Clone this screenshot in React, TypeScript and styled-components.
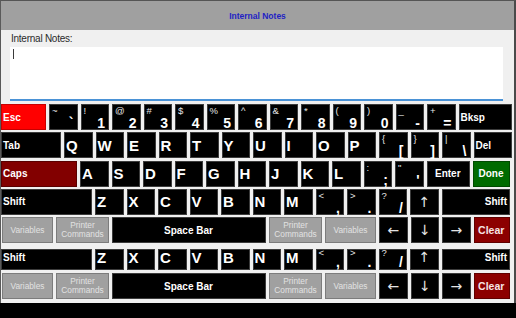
import React from "react";
import styled, { createGlobalStyle, css } from "styled-components";

const GlobalStyle = createGlobalStyle`
  html, body {
    margin: 0;
    padding: 0;
    background: #000;
  }
  #root {
    width: 516px;
    height: 318px;
    overflow: hidden;
    background: #000;
  }
`;

const Window = styled.div`
  box-sizing: border-box;
  width: 516px;
  height: 303px;
  background: #f0f0f0;
  border-top: 1px solid #555;
  border-left: 1px solid #5a5a5a;
  border-right: 2px solid #4a4a4a;
  display: flex;
  flex-direction: column;
  font-family: "Liberation Sans", Arial, sans-serif;
`;

const Header = styled.div`
  height: 29px;
  flex: none;
  background: #a0a0a0;
  display: flex;
  align-items: center;
  justify-content: center;
`;

const Title = styled.div`
  font-size: 8.5px;
  font-weight: bold;
  color: #1f1fc4;
  padding-top: 1px;
`;

const Label = styled.div`
  margin: 3px 0 0 10px;
  font-size: 10px;
  line-height: 12px;
  letter-spacing: -0.25px;
  color: #2a2a2a;
`;

const TextBox = styled.div`
  box-sizing: border-box;
  margin: 1.5px 0 0 8.5px;
  width: 493.5px;
  height: 54px;
  background: #fff;
  border-bottom: 2px solid #4a92d6;
  padding: 2px 0 0 3px;
`;

const Caret = styled.span`
  display: block;
  width: 1px;
  height: 10px;
  background: #3a3a3a;
`;

const Keyboard = styled.div<{ $mt: number; $gap: number }>`
  display: flex;
  flex-direction: column;
  margin-top: ${(p) => p.$mt}px;
  gap: ${(p) => p.$gap}px;
`;

const Row = styled.div<{ $h: number; $ml?: number; $clipped?: boolean }>`
  display: flex;
  gap: 3px;
  height: ${(p) => p.$h}px;
  margin-left: ${(p) => p.$ml ?? 0}px;
  --lift: ${(p) => (p.$clipped ? 5 : 0)}px;
  --shift-lh: ${(p) => (p.$clipped ? 5 : 11)}px;
  --dual-pb: ${(p) => (p.$clipped ? 0 : 1)}px;
`;

type Tone = "black" | "red" | "maroon" | "green" | "clear" | "gray";

const toneStyles: Record<Tone, ReturnType<typeof css>> = {
  black: css`
    background: #000;
    border-color: #3c3c3c;
    color: #fff;
  `,
  red: css`
    background: #ff0000;
    border-color: #c80000;
    color: #fff;
  `,
  maroon: css`
    background: #820000;
    border-color: #5a0000;
    color: #fff;
  `,
  green: css`
    background: #006b00;
    border-color: #004a00;
    color: #fff;
  `,
  clear: css`
    background: #8c0000;
    border-color: #600000;
    color: #f6e4e4;
  `,
  gray: css`
    background: #a0a0a0;
    border-color: #7c7c7c;
    color: #e2e2e2;
  `,
};

const KeyBase = styled.div<{ $w: number; $tone: Tone }>`
  box-sizing: border-box;
  flex: none;
  width: ${(p) => p.$w}px;
  height: 100%;
  border: 1px solid;
  ${(p) => toneStyles[p.$tone]}
  padding-bottom: var(--lift);
`;

const LabelKey = styled(KeyBase)<{ $align: "left" | "center" | "right" }>`
  display: flex;
  align-items: center;
  justify-content: ${(p) =>
    p.$align === "left" ? "flex-start" : p.$align === "right" ? "flex-end" : "center"};
  padding-left: 1px;
  padding-right: 2px;
  font-size: 10px;
  font-weight: bold;
  white-space: nowrap;
`;

const ClearKey = styled(LabelKey)`
  font-size: 10.5px;
`;

const LetterKey = styled(KeyBase)`
  display: flex;
  align-items: center;
  padding-left: 1px;
  font-size: 15px;
  font-weight: bold;
`;

const DualKey = styled(KeyBase)`
  display: flex;
  flex-direction: column;
  justify-content: space-between;
  padding: 0 3px var(--dual-pb) 2px;
`;

const Shifted = styled.span`
  align-self: flex-start;
  font-size: 9.5px;
  line-height: var(--shift-lh);
  color: #e6e6e6;
`;

const Main = styled.span`
  align-self: flex-end;
  font-size: 14px;
  line-height: 14px;
  font-weight: bold;
`;

const ArrowKey = styled(KeyBase)`
  display: flex;
  align-items: center;
  justify-content: center;
  font-family: "DejaVu Sans", sans-serif;
  font-size: 14px;
  color: #e4e4e4;
`;

const GrayKey = styled(KeyBase)`
  display: flex;
  flex-direction: column;
  align-items: center;
  justify-content: center;
  font-size: 8.3px;
  line-height: 9px;
  text-align: center;
`;

type KeySpec =
  | { kind: "label"; text: string; w: number; tone?: Tone; align?: "left" | "center" | "right" }
  | { kind: "clear"; w: number }
  | { kind: "letter"; text: string }
  | { kind: "dual"; top: string; main: string }
  | { kind: "arrow"; text: string }
  | { kind: "gray"; lines: string[]; w: number };

const W = 28.5;

const letters = (s: string): KeySpec[] => s.split("").map((c) => ({ kind: "letter", text: c }));
const duals = (pairs: string[]): KeySpec[] =>
  pairs.map((p) => ({ kind: "dual", top: p[0], main: p[1] }));

const row1: KeySpec[] = [
  { kind: "label", text: "Esc", w: 45, tone: "red", align: "left" },
  ...duals(["~`", "!1", "@2", "#3", "$4", "%5", "^6", "&7", "*8", "(9", ")0", "_-", "+="]),
  { kind: "label", text: "Bksp", w: 53.5, align: "left" },
];

const row2: KeySpec[] = [
  { kind: "label", text: "Tab", w: 60, align: "left" },
  ...letters("QWERTYUIOP"),
  ...duals(["{[", "}]", "|\\"]),
  { kind: "label", text: "Del", w: 38.5, align: "left" },
];

const row3: KeySpec[] = [
  { kind: "label", text: "Caps", w: 76, tone: "maroon", align: "left" },
  ...letters("ASDFGHJKL"),
  ...duals([":;", "\"'"]),
  { kind: "label", text: "Enter", w: 43.5, align: "center" },
  { kind: "label", text: "Done", w: 37, tone: "green", align: "center" },
];

const shiftRow: KeySpec[] = [
  { kind: "label", text: "Shift", w: 91, align: "left" },
  ...letters("ZXCVBNM"),
  ...duals(["<,", ">.", "?/"]),
  { kind: "arrow", text: "↑" },
  { kind: "label", text: "Shift", w: 68.5, align: "right" },
];

const spaceRow: KeySpec[] = [
  { kind: "gray", lines: ["Variables"], w: 51 },
  { kind: "gray", lines: ["Printer", "Commands"], w: 53 },
  { kind: "label", text: "Space Bar", w: 154, align: "center" },
  { kind: "gray", lines: ["Printer", "Commands"], w: 53 },
  { kind: "gray", lines: ["Variables"], w: 51 },
  { kind: "arrow", text: "←" },
  { kind: "arrow", text: "↓" },
  { kind: "arrow", text: "→" },
  { kind: "clear", w: 36.5 },
];

function renderKey(k: KeySpec, i: number) {
  switch (k.kind) {
    case "label":
      return (
        <LabelKey key={i} $w={k.w} $tone={k.tone ?? "black"} $align={k.align ?? "left"}>
          {k.text}
        </LabelKey>
      );
    case "clear":
      return (
        <ClearKey key={i} $w={k.w} $tone="clear" $align="center">
          Clear
        </ClearKey>
      );
    case "letter":
      return (
        <LetterKey key={i} $w={W} $tone="black">
          {k.text}
        </LetterKey>
      );
    case "dual":
      return (
        <DualKey key={i} $w={W} $tone="black">
          <Shifted>{k.top}</Shifted>
          <Main>{k.main}</Main>
        </DualKey>
      );
    case "arrow":
      return (
        <ArrowKey key={i} $w={W} $tone="black">
          {k.text}
        </ArrowKey>
      );
    case "gray":
      return (
        <GrayKey key={i} $w={k.w} $tone="gray">
          {k.lines.map((l) => (
            <span key={l}>{l}</span>
          ))}
        </GrayKey>
      );
  }
}

export default function App() {
  return (
    <>
      <GlobalStyle />
      <Window>
        <Header>
          <Title>Internal Notes</Title>
        </Header>
        <Label>Internal Notes:</Label>
        <TextBox>
          <Caret />
        </TextBox>
        <Keyboard $mt={3.5} $gap={2.25}>
          <Row $h={26}>{row1.map(renderKey)}</Row>
          <Row $h={26}>{row2.map(renderKey)}</Row>
          <Row $h={26}>{row3.map(renderKey)}</Row>
          <Row $h={26}>{shiftRow.map(renderKey)}</Row>
          <Row $h={26} $ml={1}>{spaceRow.map(renderKey)}</Row>
        </Keyboard>
        <Keyboard $mt={6} $gap={3}>
          <Row $h={21} $clipped>{shiftRow.map(renderKey)}</Row>
          <Row $h={26} $ml={1}>{spaceRow.map(renderKey)}</Row>
        </Keyboard>
      </Window>
    </>
  );
}
